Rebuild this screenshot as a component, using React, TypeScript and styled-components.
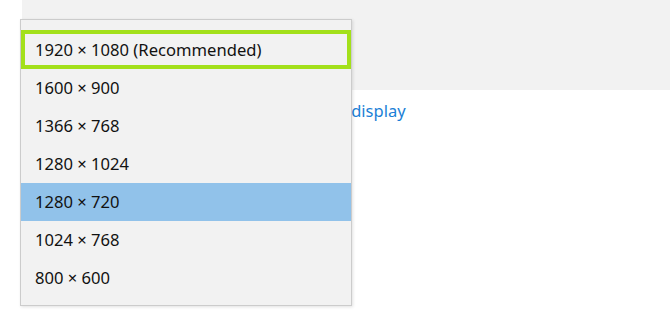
import styled, { createGlobalStyle } from 'styled-components';

const Global = createGlobalStyle`
  html, body {
    margin: 0;
    padding: 0;
    background: #ffffff;
  }
  body {
    font-family: "Noto Sans", "Open Sans", "Liberation Sans", sans-serif;
  }
`;

const Page = styled.div`
  position: relative;
  width: 670px;
  height: 329px;
  overflow: hidden;
  background: #ffffff;
`;

const TopPanel = styled.div`
  margin-left: 22px;
  height: 90px;
  background: #f2f2f2;
`;

const LinkRow = styled.div`
  padding: 9px 0 0 271px;
  font-size: 16.5px;
  line-height: 24px;
`;

const Link = styled.span`
  color: #1b7fd6;
  white-space: nowrap;
`;

const Menu = styled.ul`
  position: absolute;
  left: 20px;
  top: 19px;
  width: 330px;
  margin: 0;
  padding: 10px 0 8px;
  list-style: none;
  background: #f2f2f2;
  border: 1px solid #cccccc;
  box-shadow: 1px 1px 3px rgba(0, 0, 0, 0.12);
`;

const Item = styled.li<{ $selected?: boolean; $focused?: boolean }>`
  box-sizing: border-box;
  height: 38px;
  display: flex;
  align-items: center;
  padding: 0 0 1px 14px;
  font-size: 16.6px;
  color: #111111;
  background: ${p => (p.$selected ? '#91c2ea' : 'transparent')};
  outline: ${p => (p.$focused ? '4.5px solid #a3e01b' : 'none')};
  outline-offset: -4.5px;
  ${p => p.$focused && 'height: 39px;'}
`;

const resolutions = [
  '1920 × 1080 (Recommended)',
  '1600 × 900',
  '1366 × 768',
  '1280 × 1024',
  '1280 × 720',
  '1024 × 768',
  '800 × 600',
];

export default function App() {
  return (
    <Page>
      <Global />
      <TopPanel />
      <LinkRow>
        <Link>Advanced display</Link>
      </LinkRow>
      <Menu>
        {resolutions.map((r, i) => (
          <Item key={r} $focused={i === 0} $selected={i === 4}>
            {r}
          </Item>
        ))}
      </Menu>
    </Page>
  );
}
